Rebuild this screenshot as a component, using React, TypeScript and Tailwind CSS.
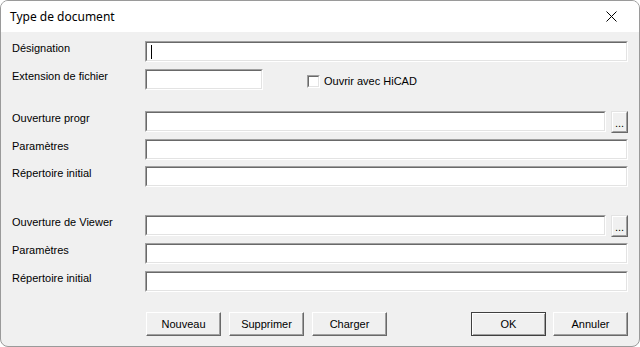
import React from 'react';

// Champ creux façon Windows classique
function Sunken({ width, caret }: { width: string; caret?: boolean }) {
  return (
    <div className={`${width} h-[21px] border-t border-l border-[#a0a0a0] border-b border-r border-b-white border-r-white`}>
      <div className="h-full border-t border-l border-[#696969] border-b border-r border-b-[#e3e3e3] border-r-[#e3e3e3] bg-white relative">
        {caret && <div className="absolute left-[4px] top-[2px] w-px h-[14px] bg-black" />}
      </div>
    </div>
  );
}

function Browse() {
  return (
    <div className="ml-[5px] w-[17px] h-[22px] border-t border-l border-[#e3e3e3] border-b border-r border-b-[#696969] border-r-[#696969]">
      <div className="h-full border-t border-l border-white border-b border-r border-b-[#a0a0a0] border-r-[#a0a0a0] bg-[#f0f0f0] flex items-end justify-center pb-[2px] text-[11px] leading-none text-black">
        ...
      </div>
    </div>
  );
}

function Row({ label, children, top }: { label: string; children: React.ReactNode; top: string }) {
  return (
    <div className={`flex items-start ${top}`}>
      <div className="w-[144px] pl-[11px] text-[11px] leading-[14px] text-black">{label}</div>
      {children}
    </div>
  );
}

function PushButton({ label, isDefault }: { label: string; isDefault?: boolean }) {
  return (
    <button
      className={`w-[75px] h-[24px] text-[11px] text-black bg-[#f0f0f0] ${
        isDefault
          ? 'border border-[#404040] shadow-[inset_1px_1px_0_#fff,inset_-1px_-1px_0_#a0a0a0]'
          : 'border border-t-white border-l-white border-b-[#696969] border-r-[#696969] shadow-[inset_-1px_-1px_0_#a0a0a0]'
      }`}
    >
      {label}
    </button>
  );
}

export default function App() {
  return (
    <div
      className="w-[640px] h-[347px] rounded-lg border border-[#9a9a9a] overflow-hidden flex flex-col bg-[#f0f0f0]"
      style={{ fontFamily: '"Liberation Sans", Arial, sans-serif' }}
    >
      {/* Barre de titre */}
      <div className="h-[31px] bg-white flex items-center justify-between pl-[9px] pr-[22px] shrink-0">
        <span className="text-[12px] text-black" style={{ fontFamily: '"Noto Sans", "Liberation Sans", sans-serif' }}>
          Type de document
        </span>
        <svg width="11" height="11" viewBox="0 0 11 11">
          <path d="M0.5 0.5 L10.5 10.5 M10.5 0.5 L0.5 10.5" stroke="#000" strokeWidth="1" />
        </svg>
      </div>

      <div className="flex flex-col pr-[11px]">
        <Row label="Désignation" top="mt-[9px]">
          <Sunken width="flex-1" caret />
        </Row>
        <Row label="Extension de fichier" top="mt-[7px]">
          <Sunken width="w-[118px]" />
          <div className="ml-[44px] mt-[5px] flex items-center">
            <div className="w-[13px] h-[13px] border border-t-[#a0a0a0] border-l-[#a0a0a0] border-b-white border-r-white">
              <div className="h-full border border-t-[#696969] border-l-[#696969] border-b-[#e3e3e3] border-r-[#e3e3e3] bg-white" />
            </div>
            <span className="ml-[4px] text-[11px] leading-[14px] text-black">Ouvrir avec HiCAD</span>
          </div>
        </Row>

        <Row label="Ouverture progr" top="mt-[21px]">
          <Sunken width="flex-1" />
          <Browse />
        </Row>
        <Row label="Paramètres" top="mt-[6px]">
          <Sunken width="flex-1" />
        </Row>
        <Row label="Répertoire initial" top="mt-[6px]">
          <Sunken width="flex-1" />
        </Row>

        <Row label="Ouverture de Viewer" top="mt-[28px]">
          <Sunken width="flex-1" />
          <Browse />
        </Row>
        <Row label="Paramètres" top="mt-[6px]">
          <Sunken width="flex-1" />
        </Row>
        <Row label="Répertoire initial" top="mt-[7px]">
          <Sunken width="flex-1" />
        </Row>

        {/* Boutons */}
        <div className="flex mt-[20px] pl-[145px]">
          <div className="flex gap-[8px]">
            <PushButton label="Nouveau" />
            <PushButton label="Supprimer" />
            <PushButton label="Charger" />
          </div>
          <div className="ml-auto flex gap-[7px]">
            <PushButton label="OK" isDefault />
            <PushButton label="Annuler" />
          </div>
        </div>
      </div>
    </div>
  );
}
